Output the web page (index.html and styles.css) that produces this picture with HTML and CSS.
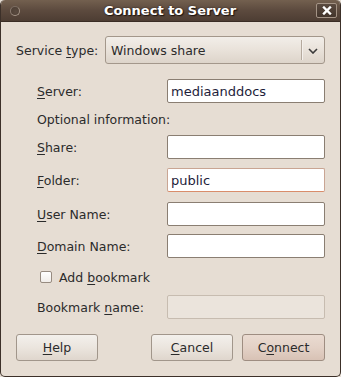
FILE: index.html
```html
<!DOCTYPE html>
<html>
<head>
<meta charset="utf-8">
<link rel="stylesheet" href="styles.css">
</head>
<body>
<div class="window">
  <div class="titlebar">
    <span class="menu-dot"></span>
    <span class="title">Connect to Server</span>
    <span class="close">
      <svg width="10" height="9" viewBox="0 0 10 9"><path d="M2 1.5 L8 7.5 M8 1.5 L2 7.5" stroke="#fff" stroke-width="2.4" stroke-linecap="square"/></svg>
    </span>
  </div>
  <div class="content">
    <div class="service-row">
      <span class="label">Service <u>t</u>ype:</span>
      <div class="combo">
        <span class="combo-text">Windows share</span>
        <span class="combo-sep"></span>
        <span class="combo-arrow">
          <svg width="10" height="6" viewBox="0 0 10 6"><path d="M1 1 L5 5 L9 1" fill="none" stroke="#3a3a3a" stroke-width="1.6"/></svg>
        </span>
      </div>
    </div>
    <div class="form">
      <div class="row r-server"><span class="label"><u>S</u>erver:</span><div class="entry">mediaanddocs</div></div>
      <div class="row r-optional"><span class="label wide">Optional information:</span></div>
      <div class="row r-share"><span class="label"><u>S</u>hare:</span><div class="entry"></div></div>
      <div class="row r-folder"><span class="label"><u>F</u>older:</span><div class="entry focused">public</div></div>
      <div class="row r-user"><span class="label"><u>U</u>ser Name:</span><div class="entry"></div></div>
      <div class="row r-domain"><span class="label"><u>D</u>omain Name:</span><div class="entry"></div></div>
      <div class="row r-check"><span class="checkbox"></span><span class="label wide">Add <u>b</u>ookmark</span></div>
      <div class="row r-bookmark"><span class="label">Bookmark <u>n</u>ame:</span><div class="entry disabled"></div></div>
    </div>
    <div class="buttons">
      <div class="button"><u>H</u>elp</div>
      <div class="spacer"></div>
      <div class="button"><u>C</u>ancel</div>
      <div class="button default">C<u>o</u>nnect</div>
    </div>
  </div>
</div>
</body>
</html>
```

FILE: styles.css
```css
html, body {
  margin: 0;
  padding: 0;
  background: #e6ddd3;
}
body {
  width: 341px;
  height: 377px;
  overflow: hidden;
  font-family: "DejaVu Sans", "Liberation Sans", sans-serif;
  font-size: 12.5px;
  color: #2b2b2b;
}
u {
  text-decoration: underline;
  text-underline-offset: 2px;
}
.window {
  box-sizing: border-box;
  width: 341px;
  height: 377px;
  border: 1px solid #3c3029;
  border-top: none;
  border-radius: 5px 5px 5px 5px;
  background: #e6ddd3;
  overflow: hidden;
  display: flex;
  flex-direction: column;
}
.titlebar {
  position: relative;
  height: 22px;
  flex: none;
  margin: 0 -1px;
  border-radius: 5px 5px 0 0;
  background: linear-gradient(#73604f, #5c4a3e 50%, #4d3d33);
  border-bottom: 1px solid #3a2d25;
  box-sizing: border-box;
  display: flex;
  align-items: center;
  justify-content: center;
}
.title {
  font-weight: bold;
  font-size: 13px;
  color: #ffffff;
  text-shadow: 1px 1px 1px #1e140f, 0 0 2px #2a1e18;
  margin-left: -1px;
}
.menu-dot {
  position: absolute;
  left: 10px;
  top: 6px;
  width: 8px;
  height: 8px;
  border-radius: 50%;
  border: 1px solid #a39386;
  border-top-color: #7a6b60;
  border-left-color: #8a7b70;
  background: radial-gradient(circle at 60% 60%, #5a4a3f, #4a3c32);
}
.close {
  position: absolute;
  right: 4px;
  top: 3px;
  width: 21px;
  height: 15px;
  box-sizing: border-box;
  border: 1px solid #a39385;
  border-radius: 2px;
  background: linear-gradient(#5a4a3f, #43352c);
  display: flex;
  align-items: center;
  justify-content: center;
}
.content {
  padding: 14px 15px 0 15px;
  display: flex;
  flex-direction: column;
}
.service-row {
  display: flex;
  align-items: center;
  height: 28px;
}
.service-row .label {
  width: 89px;
  flex: none;
}
.combo {
  box-sizing: border-box;
  width: 220px;
  height: 28px;
  border: 1px solid #a3978b;
  border-radius: 3px;
  background: linear-gradient(#f2eee9, #e9e2da 50%, #ddd4ca);
  display: flex;
  align-items: center;
}
.combo-text {
  flex: 1;
  padding-left: 5px;
}
.combo-sep {
  width: 1px;
  height: 20px;
  background: #b5aa9e;
  box-shadow: 1px 0 0 #f4f0ec;
}
.combo-arrow {
  width: 22px;
  display: flex;
  justify-content: center;
  align-items: center;
  padding-top: 1px;
}
.form {
  display: flex;
  flex-direction: column;
  padding-left: 21px;
  margin-top: 15px;
}
.row {
  display: flex;
  align-items: center;
  height: 24px;
}
.row .label {
  width: 130px;
  flex: none;
  white-space: nowrap;
}
.row .label.wide { width: auto; }
.r-optional { height: 32px; }
.r-folder { margin-top: 9px; }
.r-user { margin-top: 10px; }
.r-domain { margin-top: 8px; }
.r-check { margin-top: 7px; }
.r-bookmark { margin-top: 6px; }
.checkbox {
  box-sizing: border-box;
  width: 12px;
  height: 12px;
  margin-left: 3px;
  margin-right: 7px;
  border: 1px solid #978b80;
  border-radius: 2px;
  background: linear-gradient(#ffffff, #f1ede9);
}
.entry {
  box-sizing: border-box;
  width: 158px;
  height: 24px;
  border: 1px solid #8a7e72;
  border-radius: 2px;
  background: #ffffff;
  padding-left: 3px;
  display: flex;
  align-items: center;
  color: #1d1d3a;
  font-size: 13px;
}
.entry.focused {
  border-color: #c9a593;
  border-bottom-color: #d98d6b;
}
.entry.disabled {
  background: #ebe4dc;
  border-color: #c7bcb0;
}
.buttons {
  display: flex;
  margin-top: 15px;
  gap: 9px;
}
.spacer { flex: 1; }
.button {
  box-sizing: border-box;
  width: 82px;
  height: 27px;
  border: 1px solid #a1968b;
  border-radius: 3px;
  background: linear-gradient(#f3f0ec, #ebe5de 50%, #dfd6cd);
  display: flex;
  align-items: center;
  justify-content: center;
}
.button.default {
  width: 83px;
  background: linear-gradient(#eadbd1, #e3d1c6 50%, #d8c2b5);
  border-color: #9e8d81;
}
```
